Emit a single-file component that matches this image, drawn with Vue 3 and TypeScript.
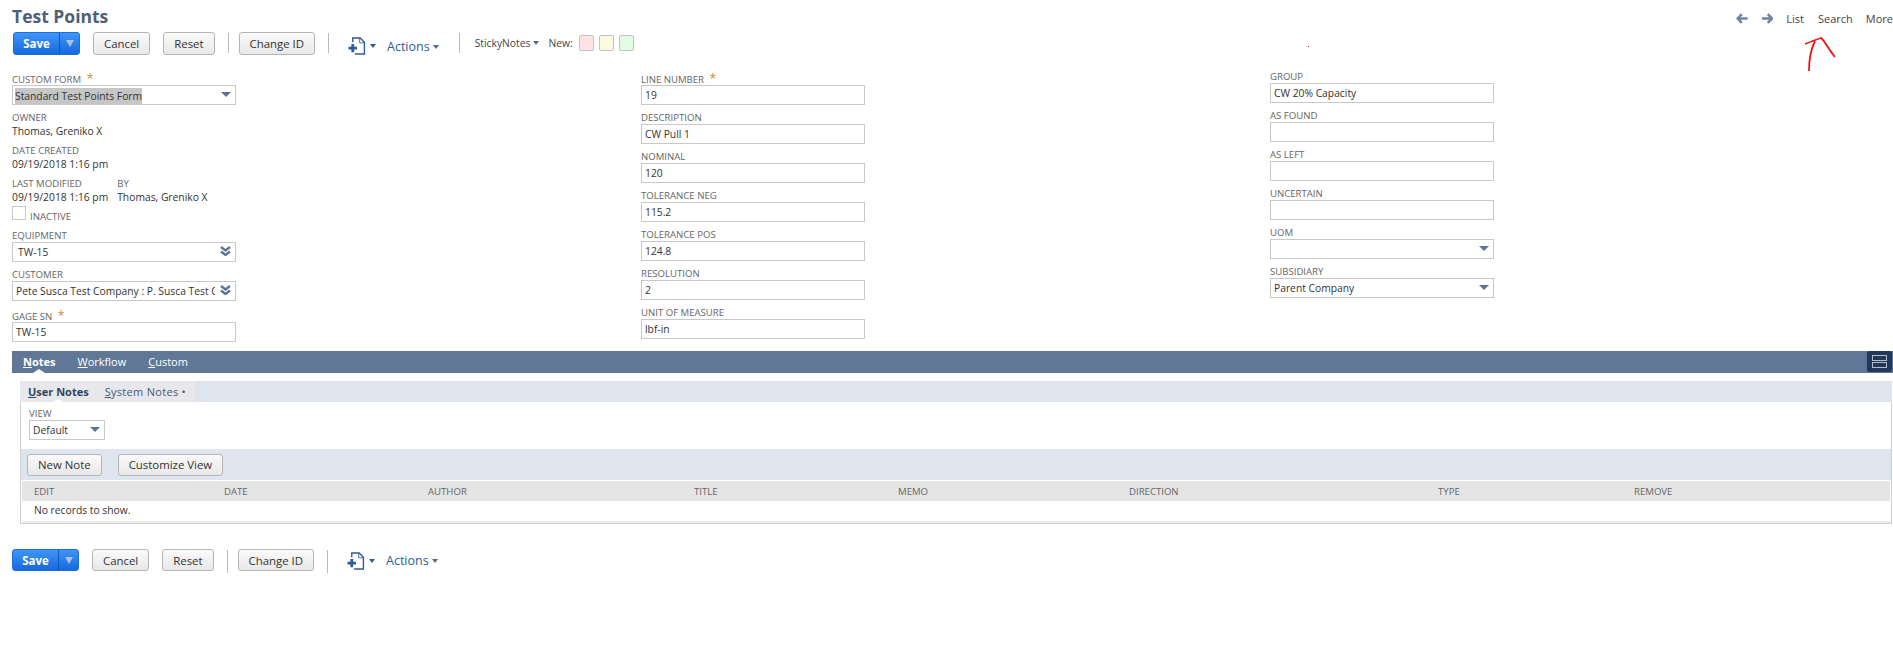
<script setup lang="ts">
interface Field {
  label: string
  value?: string
  kind?: 'input' | 'select' | 'popup'
  required?: boolean
}

const toolbars = ['top', 'bottom']

const middleFields: Field[] = [
  { label: 'Line Number', value: '19', required: true },
  { label: 'Description', value: 'CW Pull 1' },
  { label: 'Nominal', value: '120' },
  { label: 'Tolerance Neg', value: '115.2' },
  { label: 'Tolerance Pos', value: '124.8' },
  { label: 'Resolution', value: '2' },
  { label: 'Unit of Measure', value: 'lbf-in' },
]

const rightFields: Field[] = [
  { label: 'Group', value: 'CW 20% Capacity' },
  { label: 'As Found' },
  { label: 'As Left' },
  { label: 'Uncertain' },
  { label: 'UOM', kind: 'select' },
  { label: 'Subsidiary', value: 'Parent Company', kind: 'select' },
]

const columns = [
  { name: 'Edit', width: 190 },
  { name: 'Date', width: 204 },
  { name: 'Author', width: 266 },
  { name: 'Title', width: 204 },
  { name: 'Memo', width: 231 },
  { name: 'Direction', width: 309 },
  { name: 'Type', width: 196 },
  { name: 'Remove', width: 256 },
]
</script>

<template>
  <div class="page">
    <header class="head">
      <h1 class="title">Test Points</h1>
      <nav class="record-nav">
        <svg class="nav-arrow" viewBox="0 0 12 11"><path d="M6 1 1.800 5.500 6 10M2 5.500H12" /></svg>
        <svg class="nav-arrow" viewBox="0 0 12 11"><path d="M6 1 10.200 5.500 6 10M10 5.500H0" /></svg>
        <a class="nav-list">List</a>
        <a class="nav-search">Search</a>
        <a class="nav-more">More</a>
      </nav>
    </header>

    <template v-for="pos in toolbars" :key="pos">
      <div v-if="pos === 'top'" class="toolbar top">
        <div class="save"><span class="save-text">Save</span><span class="save-menu"><i class="save-caret"></i></span></div>
        <button class="btn first-btn">Cancel</button>
        <button class="btn">Reset</button>
        <span class="sep"></span>
        <button class="btn">Change ID</button>
        <span class="sep"></span>
        <svg class="new-icon" viewBox="0 0 18 17"><path d="M5 5V1h7l4 4v11H7" /><path d="M11.500 1v4.500H16" class="thin" /><path d="M5 6.500v8M1 10.500h8" class="plus" /></svg>
        <i class="caret blue"></i>
        <a class="actions">Actions<i class="caret"></i></a>
        <span class="sep sep-wide"></span>
        <span class="sticky">StickyNotes<i class="caret"></i></span>
        <span class="new-label">New:</span>
        <i class="swatch pink"></i>
        <i class="swatch yellow"></i>
        <i class="swatch green"></i>
      </div>

      <template v-if="pos === 'top'">
        <section class="form">
          <div class="col">
            <div class="field">
              <label>Custom Form <b class="star">*</b></label>
              <div class="box"><span class="selected">Standard Test Points Form</span><i class="tri"></i></div>
            </div>
            <div class="static">
              <label>Owner</label>
              <div class="val">Thomas, Greniko X</div>
            </div>
            <div class="static">
              <label>Date Created</label>
              <div class="val">09/19/2018 1:16 pm</div>
            </div>
            <div class="static pair">
              <div>
                <label>Last Modified</label>
                <div class="val">09/19/2018 1:16 pm</div>
              </div>
              <div>
                <label>By</label>
                <div class="val">Thomas, Greniko X</div>
              </div>
            </div>
            <div class="check-row"><i class="check"></i><label>Inactive</label></div>
            <div class="field">
              <label>Equipment</label>
              <div class="box indent"><span>TW-15</span>
                <svg class="dbl" viewBox="0 0 11 10"><path d="M1 1l4.500 3.500L10 1M1 5.500 5.500 9 10 5.500" /></svg>
              </div>
            </div>
            <div class="field">
              <label>Customer</label>
              <div class="box"><span class="clip">Pete Susca Test Company : P. Susca Test Company</span>
                <svg class="dbl" viewBox="0 0 11 10"><path d="M1 1l4.500 3.500L10 1M1 5.500 5.500 9 10 5.500" /></svg>
              </div>
            </div>
            <div class="field gage">
              <label>Gage SN <b class="star">*</b></label>
              <div class="box"><span>TW-15</span></div>
            </div>
          </div>

          <div class="col">
            <div v-for="f in middleFields" :key="f.label" class="field">
              <label>{{ f.label }} <b v-if="f.required" class="star">*</b></label>
              <div class="box"><span>{{ f.value }}</span></div>
            </div>
          </div>

          <div class="col col-right">
            <div v-for="f in rightFields" :key="f.label" class="field">
              <label>{{ f.label }}</label>
              <div class="box"><span>{{ f.value }}</span><i v-if="f.kind === 'select'" class="tri"></i></div>
            </div>
          </div>
        </section>

        <section class="tabs">
          <a class="tab active"><u>N</u>otes</a>
          <a class="tab"><u>W</u>orkflow</a>
          <a class="tab"><u>C</u>ustom</a>
          <span class="layout-btn"><i></i><i></i></span>
        </section>

        <section class="panel">
          <div class="subtabs">
            <div class="subtab-group">
              <a class="subtab active"><u>U</u>ser Notes</a>
              <a class="subtab system"><u>S</u>ystem Notes •</a>
            </div>
          </div>
          <div class="panel-body">
            <div class="view">
              <label>View</label>
              <div class="box"><span>Default</span><i class="tri"></i></div>
            </div>
            <div class="list-bar">
              <button class="btn">New Note</button>
              <button class="btn">Customize View</button>
            </div>
            <div class="thead">
              <span v-for="c in columns" :key="c.name" :style="{ width: c.width + 'px' }">{{ c.name }}</span>
            </div>
            <div class="empty">No records to show.</div>
          </div>
        </section>
      </template>

      <div v-else class="toolbar bottom">
        <div class="save"><span class="save-text">Save</span><span class="save-menu"><i class="save-caret"></i></span></div>
        <button class="btn first-btn">Cancel</button>
        <button class="btn">Reset</button>
        <span class="sep"></span>
        <button class="btn">Change ID</button>
        <span class="sep"></span>
        <svg class="new-icon" viewBox="0 0 18 17"><path d="M5 5V1h7l4 4v11H7" /><path d="M11.500 1v4.500H16" class="thin" /><path d="M5 6.500v8M1 10.500h8" class="plus" /></svg>
        <i class="caret blue"></i>
        <a class="actions">Actions<i class="caret"></i></a>
      </div>
    </template>

    <svg class="scribble" viewBox="0 0 40 40" aria-hidden="true">
      <path d="M5 38 C5 28 7 16 11 8 M1 11 C6 9 11 7 17 5 C21 8 24 16 31 24" />
    </svg>
    <i class="red-dot"></i>
  </div>
</template>

<style>
html, body { background: #fff; }
</style>

<style scoped>
.page {
  position: relative;
  width: 1893px;
  height: 650px;
  overflow: hidden;
  background: #fff;
  font-family: "Open Sans", "Liberation Sans", sans-serif;
  font-size: 10.300px;
  color: #333;
}
.head {
  display: flex;
  justify-content: space-between;
  height: 32px;
  padding-left: 12px;
}
.title {
  margin: 6px 0 0;
  font-size: 17.500px;
  line-height: 20px;
  font-weight: 700;
  color: #4d5f79;
}
.record-nav {
  display: flex;
  align-items: center;
  height: 36px;
  width: 157px;
  font-size: 11px;
  color: #444;
  white-space: nowrap;
}
.nav-arrow { width: 12px; height: 11px; margin-right: 14px; fill: none; stroke: #6d85a5; stroke-width: 2.600; }
.nav-arrow + .nav-arrow { margin-right: 13px; }
.nav-list { margin-right: 14px; }
.nav-search { margin-right: 13px; }

.toolbar { display: flex; align-items: flex-start; }
.toolbar.top { padding-left: 13px; height: 23px; }
.toolbar.bottom { padding-left: 12px; height: 22px; margin-top: 25px; }

.save {
  display: flex;
  width: 67px;
  height: 100%;
  border-radius: 3px;
  border: 1px solid #1a6fd8;
  box-sizing: border-box;
  background: linear-gradient(#3f95f8, #1569dd);
  color: #fff;
  font-size: 11.500px;
  font-weight: 700;
  margin-right: 13px;
}
.save-text { width: 45px; text-align: center; line-height: 21px; }
.save-menu { flex: 1; border-left: 1px solid #0f57b5; display: flex; align-items: center; justify-content: center; }
.save-caret { width: 0; height: 0; border-left: 4px solid transparent; border-right: 4px solid transparent; border-top: 7px solid #a9c4e6; }

.btn {
  height: 100%;
  box-sizing: border-box;
  padding: 0 10px;
  border: 1px solid #b5b5b5;
  border-radius: 3px;
  background: linear-gradient(#fafafa, #e8e8e8);
  font: 11.400px "Open Sans", "Liberation Sans", sans-serif;
  color: #333;
  margin-right: 13px;
  white-space: nowrap;
}
.sep { width: 1px; height: 20px; margin: 1px 10px 0 0; background: #b9b9b9; }
.bottom .sep { height: 23px; }
.new-icon { width: 20px; height: 18px; margin: 3px 3px 0 8px; fill: none; stroke: #2f5b98; stroke-width: 1.300; }
.top .new-icon { margin-top: 5px; }
.new-icon .thin { stroke-width: .8; }
.new-icon .plus { stroke-width: 2.600; }
.caret {
  display: inline-block;
  width: 0;
  height: 0;
  margin-left: 3px;
  vertical-align: 2px;
  border-left: 3.500px solid transparent;
  border-right: 3.500px solid transparent;
  border-top: 4px solid #596a84;
}
.caret.blue { border-top-color: #2f5b98; margin: 10px 0 0 0; }
.top .caret.blue { margin-top: 12px; }
.actions { margin: 3px 0 0 11px; font-size: 12.500px; line-height: 18px; color: #2f5b98; white-space: nowrap; }
.top .actions { margin-top: 6px; }
.sep-wide { margin-left: 20px; margin-right: 15px; }
.sticky { font-size: 10.300px; line-height: 23px; color: #444; white-space: nowrap; }
.new-label { margin: 0 6px 0 9px; line-height: 23px; color: #444; }
.swatch { width: 15px; height: 16px; margin: 3px 5px 0 0; border-radius: 2px; border: 1px solid #c4c4c4; box-sizing: border-box; }
.pink { background: #fde2e6; }
.yellow { background: #fbfbe2; }
.green { background: #e3fbe3; }

.form {
  display: grid;
  grid-template-columns: 629px 629px 224px;
  padding: 17px 0 0 12px;
  height: 296px;
  box-sizing: border-box;
}
.col-right { margin-top: -2px; }
label {
  display: block;
  height: 13px;
  line-height: 13px;
  font-size: 9.600px;
  text-transform: uppercase;
  color: #666;
  white-space: nowrap;
}
.star { color: #d28a2c; font-weight: 400; font-size: 12px; margin-left: 3px; }
.field { margin-bottom: 6px; width: 224px; }
.field.gage { margin-top: 8px; }
.box {
  position: relative;
  display: flex;
  align-items: center;
  box-sizing: border-box;
  height: 20px;
  padding: 0 3px;
  border: 1px solid #c8c8c8;
  background: #fff;
  font-size: 10.300px;
  white-space: nowrap;
  color: #333;
}
.box.indent { padding-left: 5px; }
.selected { background: #c6c6c6; line-height: 16px; margin: 2px 0 0 -1px; }
.clip { width: 199px; overflow: hidden; }
.tri {
  position: absolute;
  right: 4px;
  top: 6px;
  width: 0;
  height: 0;
  border-left: 5px solid transparent;
  border-right: 5px solid transparent;
  border-top: 5px solid #5d7396;
}
.dbl { position: absolute; right: 4px; top: 3px; width: 11px; height: 10px; fill: none; stroke: #5d7396; stroke-width: 2.300; }
.static { margin-bottom: 1px; }
.val { height: 19px; line-height: 15px; white-space: nowrap; }
.pair { display: flex; gap: 9px; margin-bottom: 0; }
.pair .val { height: 16px; }
.check-row { display: flex; align-items: flex-end; height: 14px; margin: 0 0 9px; }
.check { width: 14px; height: 14px; box-sizing: border-box; border: 1px solid #c8c8c8; }
.check-row label { margin: 0 0 -3px 4px; }

.tabs {
  position: relative;
  display: flex;
  gap: 22px;
  margin-left: 12px;
  padding-left: 11px;
  height: 22px;
  background: #607798;
}
.tab { position: relative; line-height: 22px; font-size: 11px; color: #fff; }
.tab.active { font-weight: 700; }
.tab.active::after {
  content: "";
  position: absolute;
  left: 10px;
  bottom: 0;
  border-left: 6px solid transparent;
  border-right: 6px solid transparent;
  border-bottom: 4px solid #fff;
}
.layout-btn {
  position: absolute;
  right: 1px;
  top: 0;
  width: 25px;
  height: 21px;
  box-sizing: border-box;
  padding: 4px 5px;
  display: flex;
  flex-direction: column;
  gap: 1px;
  border-radius: 2px;
  background: #22375c;
}
.layout-btn i { flex: 1; border: 1px solid #b5bcc8; }

.panel { margin: 8px 1px 0 20px; }
.subtabs { height: 21px; background: #dfe5ef; }
.subtab-group { display: inline-flex; gap: 16px; height: 21px; background: #e7e7ec; padding: 0 9px 0 8px; }
.subtab { position: relative; line-height: 21px; font-size: 11px; color: #4b5a73; white-space: nowrap; }
.subtab.system { letter-spacing: .3px; }
.subtab.active { font-weight: 700; color: #34445e; }
.subtab.active::after {
  content: "";
  position: absolute;
  left: 24px;
  bottom: 0;
  border-left: 6px solid transparent;
  border-right: 6px solid transparent;
  border-bottom: 3px solid #fff;
}
.panel-body {
  height: 122px;
  box-sizing: border-box;
  border: 1px solid #cfcfcf;
  border-top: 0;
}
.view { height: 47px; padding: 5px 0 0 8px; box-sizing: border-box; }
.view .box { width: 76px; }
.list-bar { display: flex; align-items: center; gap: 3px; height: 31px; padding-left: 6px; background: #dfe5ef; }
.list-bar .btn { height: 22px; }
.thead {
  display: flex;
  align-items: center;
  height: 20px;
  margin: 1px 1px 0;
  background: #e5e5e5;
  font-size: 9.600px;
  text-transform: uppercase;
  color: #666;
}
.thead span { padding-left: 12px; box-sizing: border-box; flex: none; }
.empty { height: 20px; line-height: 18px; padding-left: 12px; margin-left: 1px; border-bottom: 2px solid #eee; }

.scribble { position: absolute; left: 1804px; top: 33px; width: 40px; height: 40px; fill: none; stroke: #f01010; stroke-width: 1.800; }
.red-dot { position: absolute; left: 1308px; top: 46px; width: 1px; height: 1px; background: #e00; }
</style>
